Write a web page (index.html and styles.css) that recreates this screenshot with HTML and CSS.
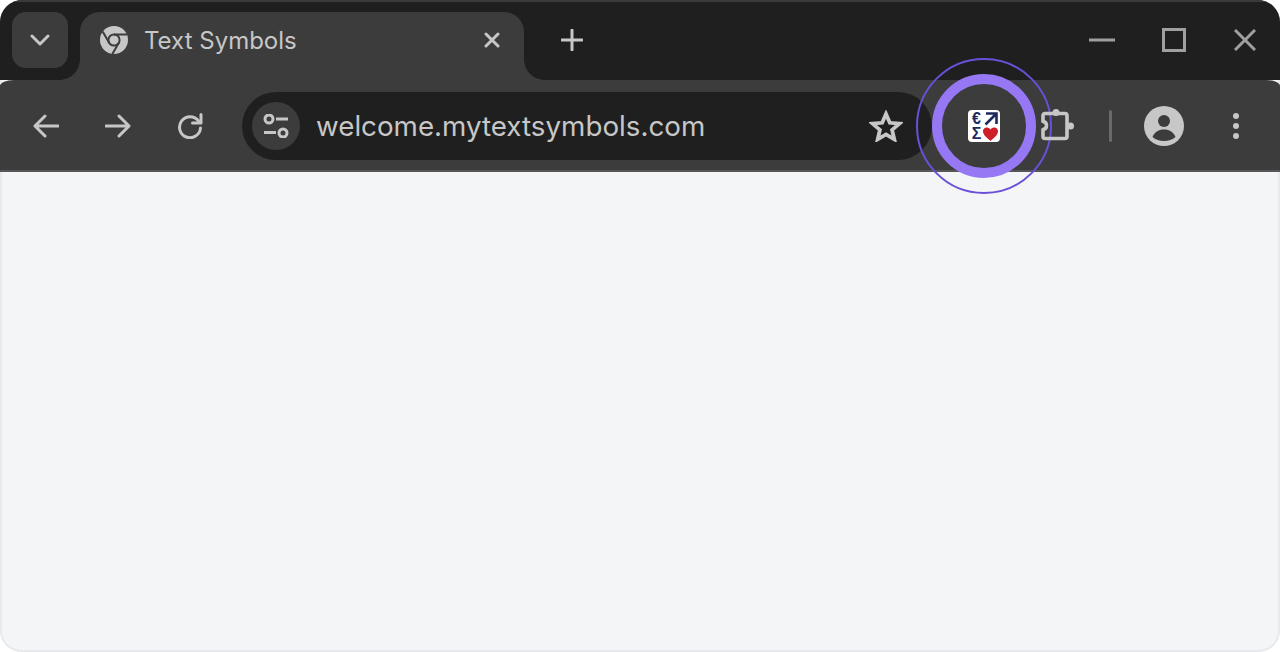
FILE: index.html
```html
<!DOCTYPE html>
<html>
<head>
  <title>Text Symbols</title>
  <link rel="stylesheet" href="styles.css">
</head>
<body>

  <div class="window">

    <div class="tab-strip">
      <button class="tab-search">
        <svg width="20" height="12" viewBox="0 0 20 12"><path d="M2 2l8 8 8-8" class="line"/></svg>
      </button>

      <div class="tab">
        <svg class="favicon" width="28" height="28" viewBox="0 0 28 28">
          <circle cx="14" cy="14" r="14" fill="#c7c7c7"/>
          <g stroke="#3c3c3c" stroke-width="2" fill="none">
            <circle cx="14" cy="14" r="5.6"/>
            <path d="M14 8.4H27"/>
            <path d="M14 8.4H27" transform="rotate(120 14 14)"/>
            <path d="M14 8.4H27" transform="rotate(240 14 14)"/>
          </g>
        </svg>
        <span class="tab-title">Text Symbols</span>
        <svg class="tab-close" width="16" height="16" viewBox="0 0 16 16"><path d="M2 2l12 12M14 2L2 14" class="line"/></svg>
      </div>

      <svg class="new-tab" width="22" height="22" viewBox="0 0 22 22"><path d="M11 1v20M1 11h20" class="line"/></svg>

      <div class="window-controls">
        <svg width="26" height="4" viewBox="0 0 26 4"><path d="M0 2h26" class="thin"/></svg>
        <svg width="24" height="24" viewBox="0 0 24 24"><rect x="1.5" y="1.5" width="21" height="21" class="thin"/></svg>
        <svg class="win-close" width="22" height="22" viewBox="0 0 22 22"><path d="M1 1l20 20M21 1L1 21" class="thin"/></svg>
      </div>
    </div>

    <div class="toolbar">
      <button class="tool">
        <svg width="26" height="24" viewBox="0 0 26 24"><path d="M25 12H2M12 2L2 12l10 10" class="line"/></svg>
      </button>
      <button class="tool">
        <svg width="26" height="24" viewBox="0 0 26 24"><path d="M1 12h23M14 2l10 10-10 10" class="line"/></svg>
      </button>
      <button class="tool">
        <svg width="26" height="26" viewBox="0 0 26 26"><path d="M21.5 8A10.5 10.5 0 1 0 23.5 15" class="line"/><path d="M24 1.5V10h-8.500" class="line"/></svg>
      </button>

      <div class="omnibox">
        <div class="site-info">
          <svg width="26" height="24" viewBox="0 0 26 24">
            <circle cx="6" cy="5" r="4" class="thin"/>
            <path d="M13 5h12M1 18.500h12" class="thin"/>
            <circle cx="20" cy="19" r="4" class="thin"/>
          </svg>
        </div>
        <span class="url">welcome.mytextsymbols.com</span>
        <svg class="star" width="34" height="32" viewBox="0 0 34 32"><path d="M17 4l3.800 8.800 9.700.8-7.400 6.300 2.200 9.400-8.300-4.900-8.300 4.900 2.200-9.400-7.400-6.300 9.700-.8z" class="star-line"/></svg>
      </div>

      <button class="tool ext">
        <span class="ring-thin"></span>
        <span class="ring-thick"></span>
        <span class="ext-icon">
          <span class="sym">€</span>
          <svg width="14" height="14" viewBox="0 0 14 14"><path d="M2 1.500h10.500V12M12.500 1.500L1.500 12.500" fill="none" stroke="#1c2a5e" stroke-width="2.600"/></svg>
          <span class="sym">Σ</span>
          <svg width="15" height="14" viewBox="0 0 15 14"><path d="M7.500 14C3 10 0 7.500 0 4.200A4 4 0 0 1 7.500 2.500 4 4 0 0 1 15 4.200C15 7.500 12 10 7.500 14z" fill="#cf1f2b"/></svg>
        </span>
      </button>

      <button class="tool puzzle">
        <svg width="34" height="34" viewBox="0 0 34 34">
          <path d="M5 4.500h20a2 2 0 0 1 2 2v21a2 2 0 0 1-2 2H5a2 2 0 0 1-2-2v-7a4 4 0 0 0 3.500-4 4 4 0 0 0-3.500-4v-6a2 2 0 0 1 2-2z" class="puzzle-line"/>
          <circle cx="16" cy="3.500" r="3.500" fill="#c7c7c7"/>
          <circle cx="30.500" cy="17" r="3.500" fill="#c7c7c7"/>
        </svg>
      </button>

      <div class="divider"></div>

      <button class="tool">
        <svg width="40" height="40" viewBox="0 0 40 40">
          <circle cx="20" cy="20" r="20" fill="#c7c7c7"/>
          <circle cx="20" cy="15" r="6" fill="#3c3c3c"/>
          <path d="M8.500 31c2-5 6-7.500 11.500-7.500S29.500 26 31.500 31C28.500 33.500 24.500 35 20 35S11.500 33.500 8.500 31z" fill="#3c3c3c"/>
        </svg>
      </button>
      <button class="tool">
        <svg width="8" height="28" viewBox="0 0 8 28" fill="#c7c7c7"><circle cx="4" cy="4" r="3"/><circle cx="4" cy="14" r="3"/><circle cx="4" cy="24" r="3"/></svg>
      </button>
    </div>

    <div class="content"></div>

  </div>

</body>
</html>
```

FILE: styles.css
```css
html, body {
  margin: 0;
  height: 100%;
  background: #ffffff;
  overflow: hidden;
}

.window {
  box-sizing: border-box;
  height: 652px;
  display: flex;
  flex-direction: column;
  border-radius: 22px;
  overflow: hidden;
  font-family: 'Inter', 'Liberation Sans', sans-serif;
  background: #f4f5f7;
  box-shadow: inset 0 -2px 0 #e8e9ec, inset 2px 0 0 #e8e9ec, inset -2px 0 0 #e8e9ec;
}

button {
  border: none;
  background: none;
  padding: 0;
}

svg {
  display: block;
}

.line {
  fill: none;
  stroke: #c7c7c7;
  stroke-width: 3;
  stroke-linecap: round;
  stroke-linejoin: round;
}

.puzzle-line {
  fill: none;
  stroke: #c7c7c7;
  stroke-width: 3.6;
  stroke-linejoin: round;
}

.star-line {
  fill: none;
  stroke: #c7c7c7;
  stroke-width: 3.8;
  stroke-linejoin: miter;
}

.thin {
  fill: none;
  stroke: #a0a0a0;
  stroke-width: 3;
}

.site-info .thin {
  stroke: #c7c7c7;
}

.tab-strip {
  box-sizing: border-box;
  height: 80px;
  flex: none;
  display: flex;
  align-items: flex-start;
  padding: 10px 0 0 12px;
  background: #1f1f1f;
  border-top: 2px solid #3a3a3a;
}

.tab-search {
  position: relative;
  z-index: 1;
  width: 56px;
  height: 56px;
  display: flex;
  align-items: center;
  justify-content: center;
  background: #3c3c3c;
  border-radius: 14px;
}

.tab {
  position: relative;
  box-sizing: border-box;
  width: 444px;
  height: 68px;
  margin-left: 12px;
  padding: 0 24px 12px 20px;
  display: flex;
  align-items: center;
  background: #3c3c3c;
  border-radius: 20px 20px 0 0;
}

.tab::before,
.tab::after {
  content: "";
  position: absolute;
  bottom: 0;
  width: 20px;
  height: 20px;
}

.tab::before {
  left: -20px;
  background: radial-gradient(circle at 0 0, #1f1f1f 19.500px, #3c3c3c 20px);
}

.tab::after {
  right: -20px;
  background: radial-gradient(circle at 100% 0, #1f1f1f 19.500px, #3c3c3c 20px);
}

.favicon {
  flex: none;
}

.tab-title {
  flex: 1;
  margin-left: 16px;
  font-size: 24px;
  color: #c7c7c7;
}

.new-tab {
  margin: 17px 0 0 37px;
}

.window-controls {
  margin-left: auto;
  height: 56px;
  display: flex;
  align-items: center;
  gap: 47px;
  padding-right: 24px;
}

.win-close {
  margin-left: 1px;
}

.toolbar {
  position: relative;
  box-sizing: border-box;
  height: 92px;
  flex: none;
  display: flex;
  align-items: center;
  padding: 2px 8px 0 10px;
  background: #3c3c3c;
  border-bottom: 2px solid #565656;
  border-radius: 14px 14px 0 0 / 6px 6px 0 0;
}

.tool {
  position: relative;
  width: 72px;
  height: 72px;
  flex: none;
  display: flex;
  align-items: center;
  justify-content: center;
}

.omnibox {
  box-sizing: border-box;
  width: 690px;
  height: 68px;
  margin: 0 16px;
  padding: 0 29px 0 10px;
  flex: none;
  display: flex;
  align-items: center;
  background: #1f1f1f;
  border-radius: 34px;
}

.site-info {
  width: 48px;
  height: 48px;
  flex: none;
  display: flex;
  align-items: center;
  justify-content: center;
  background: #3c3c3c;
  border-radius: 50%;
}

.url {
  flex: 1;
  margin-left: 16px;
  font-size: 27.750px;
  color: #c7c7c7;
  white-space: nowrap;
}

.ring-thin,
.ring-thick {
  position: absolute;
  top: 50%;
  left: 50%;
  box-sizing: border-box;
  border-radius: 50%;
  transform: translate(-50%, -50%);
}

.ring-thin {
  width: 136px;
  height: 136px;
  border: 2px solid #6a50d8;
}

.ring-thick {
  width: 104px;
  height: 104px;
  border: 10px solid #9678f5;
}

.ext-icon {
  position: relative;
  box-sizing: border-box;
  width: 32px;
  height: 32px;
  padding: 1px 2px;
  display: grid;
  grid-template-columns: 13px 15px;
  grid-template-rows: 15px 15px;
  place-items: center;
  background: #ffffff;
  border-radius: 4px;
}

.sym {
  font-family: 'Liberation Sans', sans-serif;
  font-size: 16px;
  line-height: 15px;
  font-weight: 700;
  color: #1c2a5e;
}

.puzzle {
  margin-left: 1px;
}

.divider {
  width: 3px;
  height: 32px;
  margin: 0 16px;
  flex: none;
  background: #6a6a6a;
  border-radius: 2px;
}

.content {
  flex: 1;
}
```
